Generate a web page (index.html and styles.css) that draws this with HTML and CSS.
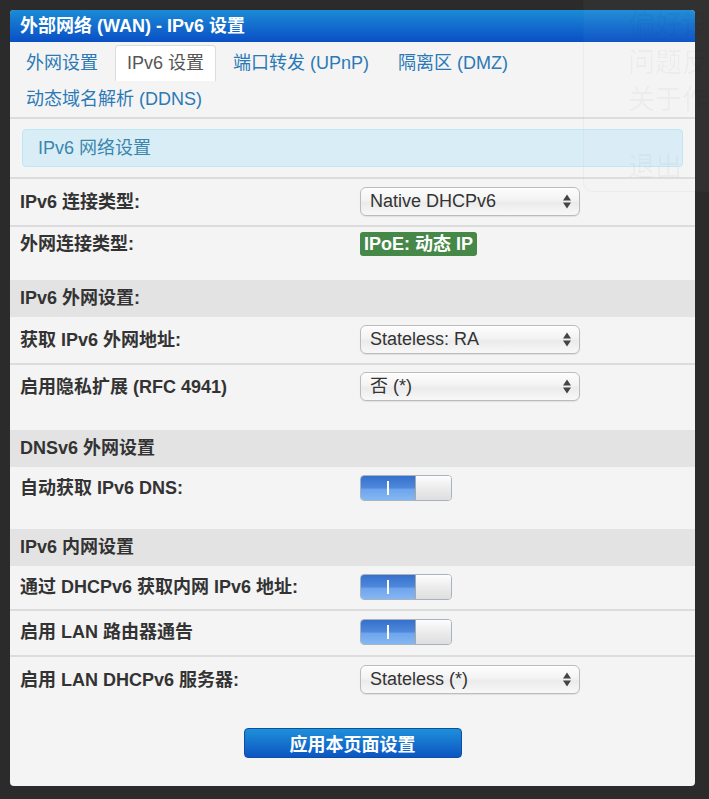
FILE: index.html
```html
<!DOCTYPE html>
<html lang="zh-CN">
<head>
<meta charset="utf-8">
<title>IPv6 设置</title>
<link rel="stylesheet" href="styles.css">
</head>
<body>
<div class="panel">
  <div class="panel-head">外部网络 (WAN) - IPv6 设置</div>
  <ul class="tabs">
    <li class="tab">外网设置</li>
    <li class="tab active">IPv6 设置</li>
    <li class="tab">端口转发 (UPnP)</li>
    <li class="tab">隔离区 (DMZ)</li>
    <li class="tab">动态域名解析 (DDNS)</li>
  </ul>
  <div class="alert-wrap"><div class="alert">IPv6 网络设置</div></div>

  <div class="row r-std">
    <div class="label">IPv6 连接类型:</div>
    <div class="value"><div class="select"><span>Native DHCPv6</span><svg class="arrows" width="8" height="15" viewBox="0 0 8 15"><path d="M0 6.5 L4 0.5 L8 6.5 Z M0 8.5 L8 8.5 L4 14.5 Z"/></svg></div></div>
  </div>
  <div class="row r-badge">
    <div class="label">外网连接类型:</div>
    <div class="value"><span class="badge">IPoE: 动态 IP</span></div>
  </div>

  <div class="section">IPv6 外网设置:</div>
  <div class="row r-std">
    <div class="label">获取 IPv6 外网地址:</div>
    <div class="value"><div class="select"><span>Stateless: RA</span><svg class="arrows" width="8" height="15" viewBox="0 0 8 15"><path d="M0 6.5 L4 0.5 L8 6.5 Z M0 8.5 L8 8.5 L4 14.5 Z"/></svg></div></div>
  </div>
  <div class="row r-last-sel">
    <div class="label">启用隐私扩展 (RFC 4941)</div>
    <div class="value"><div class="select"><span>否 (*)</span><svg class="arrows" width="8" height="15" viewBox="0 0 8 15"><path d="M0 6.5 L4 0.5 L8 6.5 Z M0 8.5 L8 8.5 L4 14.5 Z"/></svg></div></div>
  </div>

  <div class="section">DNSv6 外网设置</div>
  <div class="row r-last-tog">
    <div class="label">自动获取 IPv6 DNS:</div>
    <div class="value"><div class="toggle"><div class="toggle-on"><span class="bar"></span></div><div class="toggle-knob"></div></div></div>
  </div>

  <div class="section">IPv6 内网设置</div>
  <div class="row r-tog r-tog-a">
    <div class="label">通过 DHCPv6 获取内网 IPv6 地址:</div>
    <div class="value"><div class="toggle"><div class="toggle-on"><span class="bar"></span></div><div class="toggle-knob"></div></div></div>
  </div>
  <div class="row r-tog">
    <div class="label">启用 LAN 路由器通告</div>
    <div class="value"><div class="toggle"><div class="toggle-on"><span class="bar"></span></div><div class="toggle-knob"></div></div></div>
  </div>
  <div class="row r-final">
    <div class="label">启用 LAN DHCPv6 服务器:</div>
    <div class="value"><div class="select"><span>Stateless (*)</span><svg class="arrows" width="8" height="15" viewBox="0 0 8 15"><path d="M0 6.5 L4 0.5 L8 6.5 Z M0 8.5 L8 8.5 L4 14.5 Z"/></svg></div></div>
  </div>

  <div class="footer"><button class="btn" type="button">应用本页面设置</button></div>
</div>

<div class="menu">
  <div class="menu-item">偏好设置</div>
  <div class="menu-item">问题反馈</div>
  <div class="menu-item">关于作者</div>
  <div class="menu-divider"></div>
  <div class="menu-item">退出</div>
</div>
</body>
</html>
```

FILE: styles.css
```css
* { box-sizing: border-box; }
html, body { margin: 0; padding: 0; }
body {
  background: #2b2b2b;
  font-family: "Liberation Sans", "Noto Sans CJK SC", sans-serif;
  font-size: 18px;
  color: #333;
  height: 799px;
  overflow: hidden;
  position: relative;
}
.panel {
  margin: 10px 0 0 10px;
  width: 685px;
  background: #f4f4f4;
  border-radius: 4px;
}
.panel-head {
  height: 32px;
  line-height: 32px;
  padding-left: 10px;
  color: #fff;
  font-weight: bold;
  background: linear-gradient(#1b8bd6, #0a4fc6);
  border-radius: 4px 4px 0 0;
}
.tabs {
  list-style: none;
  margin: 0;
  padding: 3px 0 0 4px;
  display: flex;
  flex-wrap: wrap;
  height: 77px;
  border-bottom: 2px solid #dcdcdc;
}
.tab {
  height: 36px;
  line-height: 34px;
  padding: 0 11px;
  margin-right: 5px;
  border: 1px solid transparent;
  border-bottom: 0;
  border-radius: 4px 4px 0 0;
  color: #2b79b6;
  white-space: nowrap;
}
.tab.active {
  background: #fff;
  border-color: #dcdcdc;
  color: #555;
}
.alert-wrap {
  padding: 10px 12px;
  border-bottom: 2px solid #dcdcdc;
}
.alert {
  height: 38px;
  line-height: 36px;
  padding-left: 15px;
  background: #d9edf7;
  border: 1px solid #bce8f1;
  border-radius: 4px;
  color: #3a87ad;
}
.row {
  display: flex;
  align-items: flex-start;
  padding: 8px 10px 9px;
}
.label {
  width: 340px;
  font-weight: bold;
  color: #333;
  line-height: 22px;
}
.value { flex: 1; display: flex; }
.r-std { border-bottom: 2px solid #dcdcdc; }
.r-std .label, .r-last-sel .label, .r-final .label { margin-top: 4px; }
.r-badge { padding: 5px 10px 24px; }
.r-badge .label { margin-top: 1px; }
.r-last-sel { padding: 7px 10px 29px; }
.r-last-tog { padding: 8px 10px 28px; }
.r-tog { padding: 8px 10px 10px; border-bottom: 2px solid #dcdcdc; }
.r-tog-a { padding-bottom: 9px; }
.r-tog .label, .r-last-tog .label { margin-top: 2px; }
.r-final { padding: 8px 10px 0; }
.section {
  height: 37px;
  line-height: 36px;
  padding-left: 10px;
  background: #e3e3e3;
  font-weight: bold;
  color: #333;
}
.select {
  position: relative;
  width: 220px;
  height: 29px;
  line-height: 27px;
  padding-left: 9px;
  border: 1px solid #bbbbbb;
  border-radius: 6px;
  background: linear-gradient(#fdfdfd, #f3f3f3 45%, #ebebeb 55%, #f8f8f8);
  box-shadow: inset 0 1px 0 #fff, 0 1px 1px rgba(0,0,0,0.08);
  color: #333;
}
.arrows {
  position: absolute;
  right: 8px;
  top: 6px;
  fill: #444;
}
.badge {
  display: inline-block;
  height: 24px;
  line-height: 24px;
  padding: 0 4px;
  background: #468847;
  color: #fff;
  font-weight: bold;
  border-radius: 3px;
}
.toggle {
  display: flex;
  width: 92px;
  height: 26px;
  border: 1px solid #a9b3c0;
  border-radius: 4px;
  overflow: hidden;
}
.toggle-on {
  width: 54px;
  display: flex;
  align-items: center;
  justify-content: center;
  background: linear-gradient(#3670cc, #4f89dc 50%, #6ea4ec 55%, #84b7f3);
}
.bar {
  display: block;
  width: 2px;
  height: 14px;
  background: #fff;
}
.toggle-knob {
  flex: 1;
  border-left: 1px solid #a7a7a7;
  background: linear-gradient(#fdfdfd, #ececec 50%, #dedede);
}
.footer {
  padding: 34px 0 28px;
  display: flex;
  justify-content: center;
}
.btn {
  width: 218px;
  height: 30px;
  padding: 0;
  font-family: inherit;
  font-size: 18px;
  font-weight: bold;
  color: #fff;
  background: linear-gradient(#1e90d9, #0c55c2);
  border: 1px solid #0b4ea6;
  border-radius: 4px;
}
.menu {
  position: absolute;
  left: 583px;
  top: 0;
  width: 126px;
  height: 192px;
  padding: 7px 0 0 44px;
  background: rgba(255,255,255,0.03);
  border: 1px solid rgba(0,0,0,0.03);
  border-top: 0;
  border-right: 0;
  border-radius: 0 0 0 10px;
  font-size: 27px;
  color: rgba(0,0,0,0.045);
  white-space: nowrap;
  overflow: hidden;
}
.menu-item {
  height: 37.5px;
  line-height: 37.5px;
}
.menu-divider {
  height: 1px;
  margin: 14px 0 14px -44px;
}
```
